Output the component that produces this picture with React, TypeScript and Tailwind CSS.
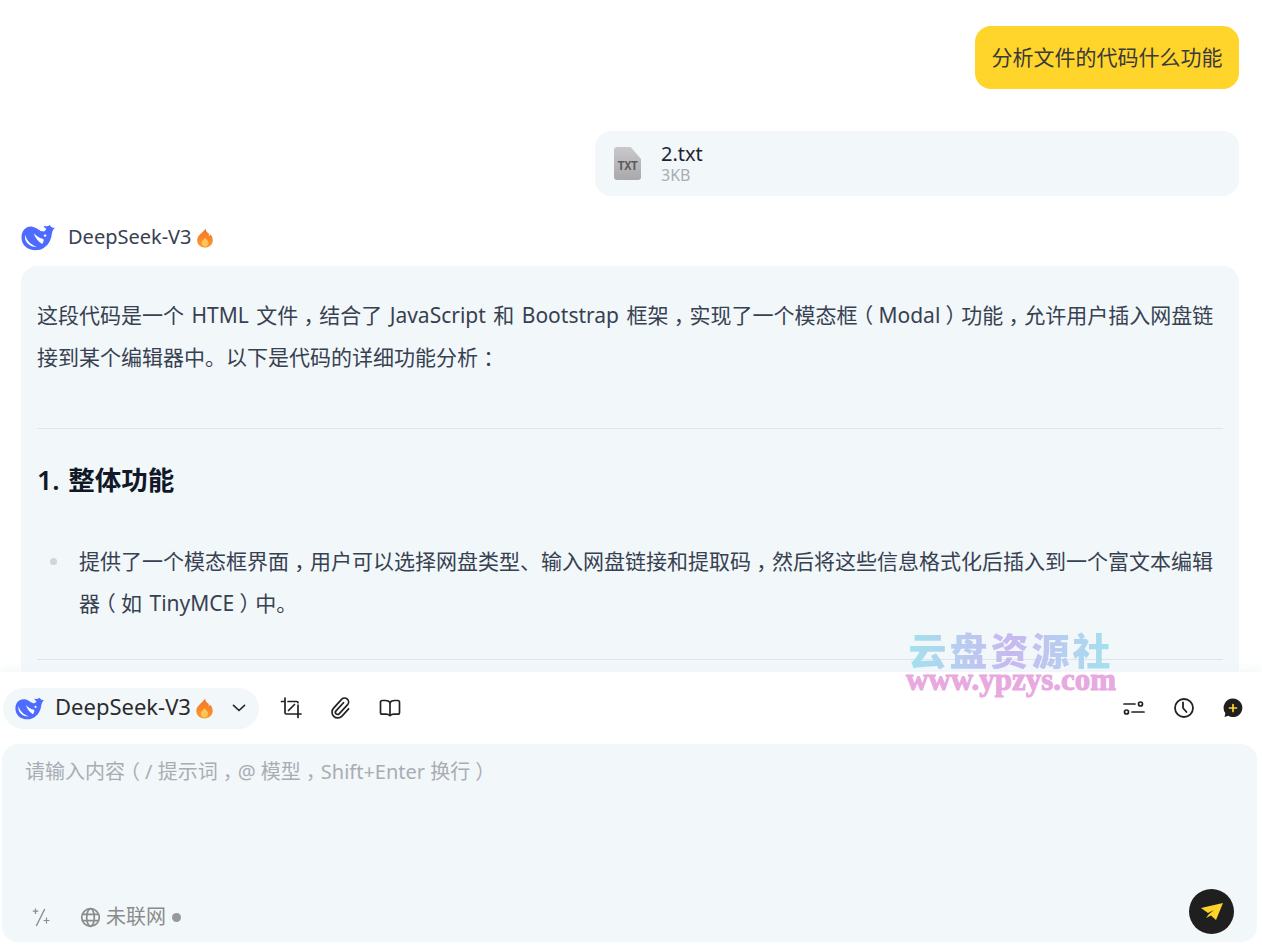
const FONT = "[font-family:'Noto_Sans','Noto_Sans_CJK_SC',sans-serif] [word-spacing:2px]";

// the reference font sits CJK punctuation mid-cell, so use the half-width forms with even margins
function Zh({ text }: { text: string }) {
  return (
    <>
      {text.split(/([，：（）\n])/).map((part, i) => {
        if (part === "\n") return <br key={i} />;
        if (/^[，：（）]$/.test(part)) {
          return (
            <span key={i} className="mx-[0.25em] [font-feature-settings:'halt']">
              {part}
            </span>
          );
        }
        return part;
      })}
    </>
  );
}

function Whale({ className }: { className?: string }) {
  return (
    <svg viewBox="0 0 36 28" className={className}>
      <path
        fill="#4d6bfe"
        d="M.5 14C.5 6 6 1.500 12 2.500C17 3.300 19.500 7 23 7.500C25 7.800 26.300 6.500 26.800 4.800C25.300 4 24.300 3 23.800 1.500C26.300 2.500 29 2.500 30.500.8C31.500 2.800 33 3.800 35.800 3.800C33.800 5.800 33 8 32.500 11C31.500 18.500 26.500 26 18 27.300C8.500 28.500.5 23 .5 14Z"
      />
      <path
        fill="#fff"
        d="M4.500 11C5.500 16.500 10 21.500 17 23.800C12 24.300 6.800 21.500 4.800 16.800C4.200 14.800 4 12.800 4.500 11Z M13.500 9.500C16.500 12.500 20 15 23.500 15.500C24.500 16 24 18.500 22.300 21C18.500 18.500 14.800 14.500 13.500 9.500Z"
      />
      <circle cx="25.500" cy="12" r="1.300" fill="#fff" />
    </svg>
  );
}

function Flame({ className, id }: { className?: string; id: string }) {
  return (
    <svg viewBox="0 0 16 20" className={className}>
      <defs>
        <linearGradient id={id} x1="0" y1="0" x2="0" y2="1">
          <stop offset="0" stopColor="#f4732a" />
          <stop offset="1" stopColor="#fb9a2c" />
        </linearGradient>
      </defs>
      <path
        fill={`url(#${id})`}
        d="M8.500 0.500C9 4 11 5 12 5.500C12.200 6.500 12 7.500 11.500 8C12.500 7.800 13 7 13.200 6.300C15 8 15.800 10.200 15.800 12.200C15.800 16.500 12.500 19.500 8 19.500C3.500 19.500 0.200 16.500 0.200 12.200C0.200 8 4 6 5.500 4C6.500 3 8 2 8.500 0.500Z"
      />
      <path
        fill="#ffc555"
        d="M8 9.500C8.500 11 11.500 12.500 11.500 15C11.500 17 10 18.500 8 18.500C6 18.500 4.500 17 4.500 15C4.500 12.500 7.500 11.500 8 9.500Z"
      />
    </svg>
  );
}

function TxtIcon() {
  return (
    <div className="flex h-[33px] w-[27px] items-end justify-center rounded-[3px] bg-gradient-to-b from-[#c9c9cb] to-[#a9a9ab] pb-[6px] [clip-path:polygon(0_0,62%_0,100%_36%,100%_100%,0_100%)]">
      <span className="text-[12px] font-bold leading-[13px] tracking-[-0.5px] text-[#5a5a5a] [font-family:'Liberation_Mono',monospace]">
        TXT
      </span>
    </div>
  );
}

function CropIcon() {
  return (
    <svg viewBox="0 0 22 22" className="h-[22px] w-[22px]" fill="none" stroke="#222" strokeWidth="1.700" strokeLinecap="round">
      <path d="M1.500 4.500h3.500M5 1v14.800a1.200 1.200 0 0 0 1.200 1.200H21M18 20.500V8" />
      <path d="M8 4.500h8.800A1.200 1.200 0 0 1 18 5.700M8.500 13.500L14.500 7.500" />
    </svg>
  );
}

function ClipIcon() {
  return (
    <svg viewBox="0 0 22 22" className="h-[22px] w-[22px]" fill="none" stroke="#222" strokeWidth="1.700" strokeLinecap="round" strokeLinejoin="round">
      <path d="M13.500 6L6 14.200a2.100 2.100 0 0 0 3.100 2.900L17.600 8a4 4 0 0 0-5.800-5.500L3.600 11.400a5.800 5.800 0 0 0 8.400 8l6.600-7.200" transform="translate(0 -.3)" />
    </svg>
  );
}

function BookIcon() {
  return (
    <svg viewBox="0 0 22 20" className="h-[20px] w-[22px]" fill="none" stroke="#222" strokeWidth="1.700" strokeLinejoin="round">
      <path d="M11 4.500C10 3 8.500 2.500 6.500 2.500H3.200A1.700 1.700 0 0 0 1.500 4.200v10.300c0 1 .7 1.700 1.700 1.700H7c1.800 0 3 .4 4 1.500c1-1.100 2.200-1.500 4-1.500h3.800c1 0 1.700-.7 1.700-1.700V4.200a1.700 1.700 0 0 0-1.700-1.700h-3.300c-2 0-3.500.5-4.500 2Z" />
      <path d="M11 4.500V17.500" />
    </svg>
  );
}

function ClockIcon() {
  return (
    <svg viewBox="0 0 22 22" className="h-[22px] w-[22px]" fill="none" stroke="#222" strokeWidth="1.800" strokeLinecap="round" strokeLinejoin="round">
      <circle cx="11" cy="11" r="9" />
      <path d="M10 5.500V11l3.500 4" />
    </svg>
  );
}

function GlobeIcon() {
  return (
    <svg viewBox="0 0 22 22" className="h-[21px] w-[21px]" fill="none" stroke="#8c8c8c" strokeWidth="1.800">
      <circle cx="11" cy="11" r="9.200" />
      <ellipse cx="11" cy="11" rx="4" ry="9.200" />
      <path d="M2.500 7.800h17M2.500 14.200h17" />
    </svg>
  );
}

function ChevronIcon() {
  return (
    <svg viewBox="0 0 14 8" className="h-[8px] w-[14px]" fill="none" stroke="#2b2b2b" strokeWidth="1.700" strokeLinecap="round" strokeLinejoin="round">
      <path d="M1.500 1.300L7 6.500l5.500-5.200" />
    </svg>
  );
}

function WandIcon() {
  return (
    <svg viewBox="0 0 20 20" className="h-[20px] w-[20px]" fill="none" stroke="#8c8c8c" strokeWidth="1.400">
      <path d="M13.500 2.500L5.500 18.500" strokeLinecap="round" />
      <path d="M4.500 1.500v5.500M1.800 4.200h5.500M15.500 10.500v6M12.500 13.500h6" strokeWidth="1.200" />
    </svg>
  );
}

function SlidersIcon() {
  return (
    <svg viewBox="0 0 22 18" className="h-[18px] w-[22px]" fill="none" stroke="#222" strokeWidth="1.700">
      <path d="M1 5h11M9 13h12" strokeLinecap="round" />
      <circle cx="17.500" cy="5" r="2" />
      <circle cx="3.500" cy="13" r="2" />
    </svg>
  );
}

function NewChatIcon() {
  return (
    <svg viewBox="0 0 20 20" className="h-5 w-5">
      <path fill="#1f1f1f" d="M10 .5a9.300 9.300 0 1 1-4.700 17.300L1.500 19l.9-3.800A9.300 9.300 0 0 1 10 .5Z" />
      <path d="M10 6.500v7M6.500 10h7" stroke="#ffd52b" strokeWidth="1.700" strokeLinecap="round" />
    </svg>
  );
}

function SendIcon() {
  return (
    <svg viewBox="0 0 24 20" className="h-5 w-6">
      <path fill="#fdd32a" d="M1 6L23 1L16 18L11 13.500L6 16L9 12L14 8L8 11Z" />
    </svg>
  );
}

export default function App() {
  return (
    <div className={`relative flex h-[945px] w-[1262px] flex-col overflow-hidden bg-white ${FONT}`}>
      {/* message list */}
      <div className="h-[672px] shrink-0 overflow-hidden pl-[21px] pr-[23px] pt-[26px]">
        <div className="flex justify-end">
          <div className="flex h-[63px] w-[264px] items-center justify-center rounded-[16px] bg-[#ffd52b] pt-[1px] text-[21px] text-[#3a3a3a]">
            分析文件的代码什么功能
          </div>
        </div>

        <div className="mt-[42px] flex justify-end">
          <div className="flex h-[65px] w-[644px] items-center gap-[20px] rounded-[16px] bg-[#f2f7fa] pl-[19px]">
            <TxtIcon />
            <div className="pb-[2px]">
              <p className="text-[20px] leading-[24px] text-[#1f2430]">2.txt</p>
              <p className="text-[16px] leading-[18px] text-[#a9adb3]">3KB</p>
            </div>
          </div>
        </div>

        <div className="mt-[24px] flex h-[35px] items-center">
          <Whale className="h-[27px] w-[34px]" />
          <span className="ml-[13px] pb-[2px] text-[20px] text-[#374151]">DeepSeek-V3</span>
          <Flame id="flame-a" className="ml-[5px] h-[20px] w-[16px]" />
        </div>

        <div className="mt-[11px] h-[500px] rounded-[16px] bg-[#f2f7fa] px-[16px] pt-[28px] text-[21px] leading-[42px] text-[#374151]">
          <p>
            <Zh text={"这段代码是一个 HTML 文件，结合了 JavaScript 和 Bootstrap 框架，实现了一个模态框（Modal）功能，允许用户插入网盘链\n接到某个编辑器中。以下是代码的详细功能分析："} />
          </p>
          <hr className="mt-[50px] border-[#e2e6ee]" />
          <h3 className="mt-[29px] text-[26.500px] font-semibold leading-[44px] text-[#111827]">1. 整体功能</h3>
          <ul className="mt-[38px] pl-[42px]">
            <li className="relative">
              <span className="absolute left-[-29px] top-[18px] h-[7px] w-[7px] rounded-full bg-[#d1d5db]" />
              <Zh text={"提供了一个模态框界面，用户可以选择网盘类型、输入网盘链接和提取码，然后将这些信息格式化后插入到一个富文本编辑\n器（如 TinyMCE）中。"} />
            </li>
          </ul>
          <hr className="mt-[35px] border-[#dfe3ec]" />
        </div>
      </div>

      {/* composer */}
      <div className="flex flex-1 flex-col bg-white pb-[3px] pl-[2px] pr-[5px] shadow-[0_-4px_8px_rgba(241,245,249,0.7)]">
        <div className="flex h-[72px] shrink-0 items-center justify-between">
          <div className="flex items-center">
            <div className="ml-[1px] flex h-[41px] w-[256px] items-center rounded-full bg-[#f2f7fa] pl-[12px]">
              <Whale className="h-[23px] w-[29px]" />
              <span className="ml-[11px] pb-[3px] text-[22px] text-[#2b2b2b]">DeepSeek-V3</span>
              <Flame id="flame-b" className="ml-[5px] h-[21px] w-[17px]" />
              <span className="ml-auto pr-[13px]">
                <ChevronIcon />
              </span>
            </div>
            <span className="ml-[21px]">
              <CropIcon />
            </span>
            <span className="ml-[28px]">
              <ClipIcon />
            </span>
            <span className="ml-[27px]">
              <BookIcon />
            </span>
          </div>
          <div className="flex items-center pr-[14px]">
            <SlidersIcon />
            <span className="ml-[28px]">
              <ClockIcon />
            </span>
            <div className="ml-[28px]">
              <NewChatIcon />
            </div>
          </div>
        </div>

        <div className="flex flex-1 flex-col justify-between rounded-[16px] bg-[#f2f7fa] pb-[8px] pl-[23px] pr-[23px] pt-[12px] [word-spacing:0]">
          <p className="text-[20px] leading-[32px] text-[#a9adb3]">
            <Zh text="请输入内容（/ 提示词，@ 模型，Shift+Enter 换行）" />
          </p>
          <div className="flex items-end justify-between">
            <div className="mb-[4px] flex items-center text-[#8c8c8c]">
              <div className="ml-[6px]">
                <WandIcon />
              </div>
              <span className="ml-[29px]">
                <GlobeIcon />
              </span>
              <span className="ml-[5px] text-[20px] leading-[26px]">未联网</span>
              <span className="ml-[6px] h-[9px] w-[9px] rounded-full bg-[#999]" />
            </div>
            <button className="flex h-[45px] w-[45px] items-center justify-center rounded-full bg-[#1f1f1f]">
              <SendIcon />
            </button>
          </div>
        </div>
      </div>

      {/* site watermark */}
      <div className="absolute left-[905px] top-[628px] w-[212px] text-center">
        <p className="bg-gradient-to-r from-[#9fe3ee] via-[#c8b8f0] to-[#9fe3ee] bg-clip-text text-[38px] font-black leading-[41px] tracking-[3px] text-transparent [font-family:'Noto_Sans_CJK_SC',sans-serif]">
          云盘资源社
        </p>
        <p className="-mt-[3px] text-[31px] font-bold leading-[28px] text-[#e8a8e0] [-webkit-text-stroke:1px_#e8a8e0] [font-family:'Liberation_Serif',serif]">
          www.ypzys.com
        </p>
      </div>
    </div>
  );
}
